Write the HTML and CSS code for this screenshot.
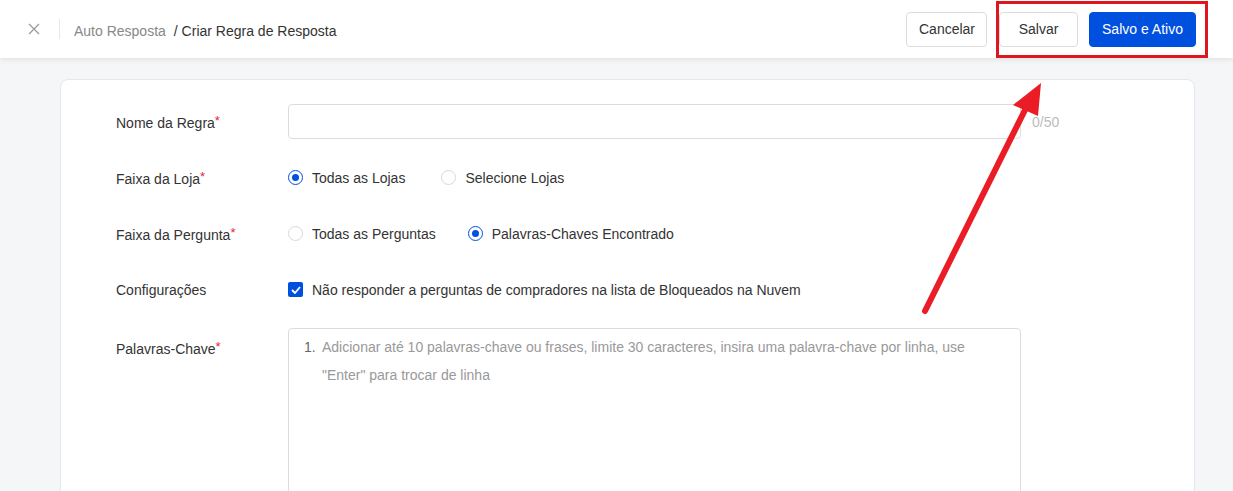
FILE: index.html
```html
<!DOCTYPE html>
<html lang="pt-BR">
<head>
  <meta charset="UTF-8">
  <title>Criar Regra de Resposta</title>
  <link rel="stylesheet" href="styles.css">
</head>
<body>
  <div class="header">
    <div class="header-left">
      <span class="close">
        <svg width="12" height="12" viewBox="0 0 12 12"><path d="M1 1L11 11M11 1L1 11" stroke="#999" stroke-width="1.2"/></svg>
      </span>
      <span class="divider"></span>
      <span class="crumb">Auto Resposta</span>
      <span class="crumb-current">/ Criar Regra de Resposta</span>
    </div>
    <div class="header-actions">
      <button class="btn btn-cancel">Cancelar</button>
      <div class="highlight">
        <button class="btn btn-save">Salvar</button>
        <button class="btn btn-primary">Salvo e Ativo</button>
      </div>
    </div>
  </div>

  <div class="main">
    <div class="card">
      <div class="row">
        <div class="label">Nome da Regra<span class="req">*</span></div>
        <div class="field">
          <div class="input"></div>
          <span class="count">0/50</span>
        </div>
      </div>

      <div class="row">
        <div class="label">Faixa da Loja<span class="req">*</span></div>
        <div class="field">
          <label class="radio wide"><span class="dot checked"></span>Todas as Lojas</label>
          <label class="radio"><span class="dot"></span>Selecione Lojas</label>
        </div>
      </div>

      <div class="row">
        <div class="label">Faixa da Pergunta<span class="req">*</span></div>
        <div class="field">
          <label class="radio"><span class="dot"></span>Todas as Perguntas</label>
          <label class="radio"><span class="dot checked"></span>Palavras-Chaves Encontrado</label>
        </div>
      </div>

      <div class="row">
        <div class="label">Configurações</div>
        <div class="field">
          <label class="check">
            <span class="box">
              <svg width="10" height="8" viewBox="0 0 10 8"><path d="M1 4L4 7L9 1" fill="none" stroke="#fff" stroke-width="1.8"/></svg>
            </span>
            Não responder a perguntas de compradores na lista de Bloqueados na Nuvem
          </label>
        </div>
      </div>

      <div class="row row-top">
        <div class="label">Palavras-Chave<span class="req">*</span></div>
        <div class="field">
          <div class="textarea">
            <span class="num">1.</span>
            <span class="placeholder">Adicionar até 10 palavras-chave ou frases, limite 30 caracteres, insira uma palavra-chave por linha, use "Enter" para trocar de linha</span>
          </div>
        </div>
      </div>
    </div>
  </div>

  <svg class="arrow" width="1233" height="491" viewBox="0 0 1233 491">
    <line x1="925" y1="311" x2="1025" y2="110" stroke="#ea1c26" stroke-width="6" stroke-linecap="round"/>
    <polygon points="1041,83 1013,105 1038,116" fill="#ea1c26"/>
  </svg>
</body>
</html>
```

FILE: styles.css
```css
body {
  margin: 0;
  font-family: "Liberation Sans", Arial, sans-serif;
  font-size: 14px;
  background-color: #f5f6f8;
  color: #333;
  height: 491px;
  overflow: hidden;
}
.header {
  height: 58px;
  background-color: white;
  display: flex;
  align-items: center;
  justify-content: space-between;
  padding: 0 25px 0 28px;
  box-shadow: 0 2px 5px rgba(0,0,0,0.08);
  position: relative;
  z-index: 1;
}
.header-left {
  display: flex;
  align-items: center;
}
.close {
  display: flex;
  width: 12px;
  height: 12px;
}
.divider {
  width: 1px;
  height: 20px;
  background-color: #e8e8e8;
  margin: 0 14px 0 19px;
}
.crumb {
  color: #888;
  margin-right: 8px;
  padding-top: 3px;
}
.crumb-current {
  color: #333;
  padding-top: 3px;
}
.header-actions {
  display: flex;
  align-items: center;
}
.btn {
  height: 35px;
  padding: 0 12px;
  font-family: inherit;
  font-size: 14px;
  color: #333;
  background-color: white;
  border: 1px solid #dcdcdc;
  border-radius: 4px;
  cursor: pointer;
}
.btn-cancel {
  width: 81px;
}
.highlight {
  display: flex;
  align-items: center;
  gap: 11px;
  margin-left: 9px;
  padding: 8px 9px 8px 0;
  border: 3px solid #e0161e;
}
.btn-save {
  width: 79px;
}
.btn-primary {
  background-color: #0050e0;
  border-color: #0050e0;
  color: white;
  width: 107px;
  padding: 0;
}
.main {
  padding: 21px 38px 0 60px;
  height: 412px;
  overflow: hidden;
}
.card {
  background-color: white;
  border: 1px solid #e6e7ea;
  border-radius: 8px;
  height: 440px;
  padding: 24px 0 0 55px;
}
.row {
  display: flex;
  align-items: center;
  min-height: 35px;
  margin-bottom: 21px;
}
.row-top {
  align-items: flex-start;
}
.label {
  width: 172px;
  color: #333;
}
.row-top .label {
  padding-top: 11px;
}
.req {
  color: #e8253a;
  vertical-align: 3px;
  font-size: 13px;
}
.field {
  display: flex;
  align-items: center;
}
.input {
  width: 731px;
  height: 33px;
  border: 1px solid #dcdcdc;
  border-radius: 4px;
}
.count {
  color: #bbb;
  margin-left: 11px;
}
.radio {
  display: flex;
  align-items: center;
  margin-right: 32px;
  color: #333;
}
.radio.wide {
  margin-right: 36px;
}
.dot {
  width: 15px;
  height: 15px;
  border: 1px solid #d9d9d9;
  border-radius: 50%;
  box-sizing: border-box;
  margin-right: 9px;
  position: relative;
}
.dot.checked {
  border-color: #0050e0;
}
.dot.checked::after {
  content: "";
  position: absolute;
  left: 3px;
  top: 3px;
  width: 7px;
  height: 7px;
  border-radius: 50%;
  background-color: #0050e0;
}
.check {
  display: flex;
  align-items: center;
  color: #333;
}
.box {
  width: 15px;
  height: 15px;
  border-radius: 2px;
  background-color: #0050e0;
  display: flex;
  align-items: center;
  justify-content: center;
  margin-right: 9px;
}
.textarea {
  width: 699px;
  height: 200px;
  border: 1px solid #dcdcdc;
  border-radius: 4px;
  padding: 4px 17px 0 15px;
  display: flex;
  line-height: 28px;
  color: #999;
}
.num {
  color: #666;
  width: 18px;
  flex-shrink: 0;
}
.arrow {
  position: absolute;
  left: 0;
  top: 0;
  z-index: 2;
  pointer-events: none;
}
```
